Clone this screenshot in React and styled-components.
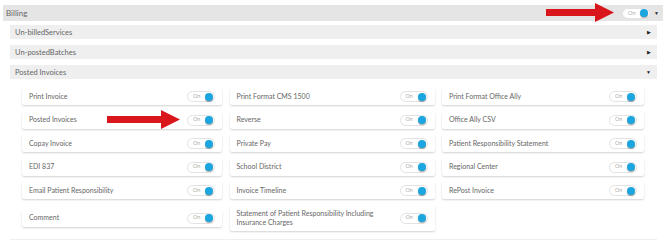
import React from "react";
import styled, { createGlobalStyle } from "styled-components";

const GlobalStyle = createGlobalStyle`
  body {
    margin: 0;
    background: #ffffff;
    font-family: Lato, "Open Sans", sans-serif;
  }
`;

const Page = styled.div`
  position: relative;
  width: 670px;
  height: 240px;
  overflow: hidden;
  padding: 5px 7px 0 3px;
  box-sizing: border-box;
`;

const HeaderBar = styled.div`
  display: flex;
  align-items: center;
  height: 16px;
  padding: 0 4px 0 3px;
  background: #e5e5e5;
  color: #666;
  font-size: 8px;
`;

const Title = styled.span`
  flex: 1;
`;

const Children = styled.div`
  display: flex;
  flex-direction: column;
  gap: 6px;
  padding: 4px 6px 0 7px;
`;

const SubRow = styled.div`
  display: flex;
  align-items: center;
  height: 14px;
  padding: 0 6px 0 5px;
  background: #efefef;
  color: #666;
  font-size: 7.5px;
`;

const Caret = styled.span`
  font-size: 5px;
  color: #222;
  margin-left: ${({ $gap }) => $gap || 0}px;
`;

const Grid = styled.div`
  display: grid;
  grid-template-columns: 200px 205px 202px;
  column-gap: 7.5px;
  row-gap: 6.5px;
  align-items: center;
  padding: 9px 0 8px 19px;
`;

const Card = styled.div`
  display: flex;
  align-items: center;
  min-height: 17px;
  padding: ${({ $tall }) => ($tall ? "3px" : "0")} 7px;
  box-sizing: border-box;
  background: #fff;
  box-shadow: 0 1px 2px rgba(0, 0, 0, 0.18);
  border-radius: 2px;
  color: #666;
  font-size: 7px;
  line-height: 9.5px;
`;

const Label = styled.span`
  flex: 1;
  padding-right: ${({ $tall }) => ($tall ? "20px" : "0")};
`;

const Pill = styled.span`
  display: inline-flex;
  align-items: center;
  justify-content: space-between;
  flex-shrink: 0;
  width: 28px;
  height: 11px;
  padding: 0 1px 0 5px;
  box-sizing: border-box;
  border: 1px solid #e2e2e2;
  border-radius: 6px;
  background: #fff;
  color: #aaa;
  font-size: 5.5px;
`;

const Knob = styled.span`
  width: 8px;
  height: 8px;
  border-radius: 50%;
  background: #1ba6e0;
  box-shadow: 0 1px 1px rgba(0, 0, 0, 0.35);
`;

const BottomBar = styled.div`
  height: 10px;
  margin: 0 6px 0 7px;
  background: #efefef;
`;

const Arrow = styled.svg`
  position: absolute;
  left: ${({ $x }) => $x}px;
  top: ${({ $y }) => $y}px;
`;

const Toggle = () => (
  <Pill>
    On
    <Knob />
  </Pill>
);

const RedArrow = ({ x, y, w, h }) => (
  <Arrow $x={x} $y={y} width={w} height={h} viewBox={`0 0 ${w} ${h}`}>
    <polygon
      points={`0,${h / 2 - 3.5} ${w - 19},${h / 2 - 3.5} ${w - 19},0 ${w},${h / 2} ${w - 19},${h} ${w - 19},${h / 2 + 3.5} 0,${h / 2 + 3.5}`}
      fill="#d9161b"
    />
  </Arrow>
);

const items = [
  ["Print Invoice", "Print Format CMS 1500", "Print Format Office Ally"],
  ["Posted Invoices", "Reverse", "Office Ally CSV"],
  ["Copay Invoice", "Private Pay", "Patient Responsibility Statement"],
  ["EDI 837", "School District", "Regional Center"],
  ["Email Patient Responsibility", "Invoice Timeline", "RePost Invoice"],
  ["Comment", "Statement of Patient Responsibility Including Insurance Charges", null],
];

export default function App() {
  return (
    <>
      <GlobalStyle />
      <Page>
        <HeaderBar>
          <Title>Billing</Title>
          <Toggle />
          <Caret $gap={4}>▼</Caret>
        </HeaderBar>
        <Children>
          <SubRow>
            <Title>Un-billedServices</Title>
            <Caret>▶</Caret>
          </SubRow>
          <SubRow>
            <Title>Un-postedBatches</Title>
            <Caret>▶</Caret>
          </SubRow>
          <SubRow>
            <Title>Posted Invoices</Title>
            <Caret>▼</Caret>
          </SubRow>
        </Children>
        <Grid>
          {items.flat().map((label, i) =>
            label ? (
              <Card key={i} $tall={label.length > 40}>
                <Label $tall={label.length > 40}>{label}</Label>
                <Toggle />
              </Card>
            ) : (
              <span key={i} />
            )
          )}
        </Grid>
        <BottomBar />
        <RedArrow x={546} y={3} w={68} h={19} />
        <RedArrow x={107} y={110} w={73} h={19} />
      </Page>
    </>
  );
}
